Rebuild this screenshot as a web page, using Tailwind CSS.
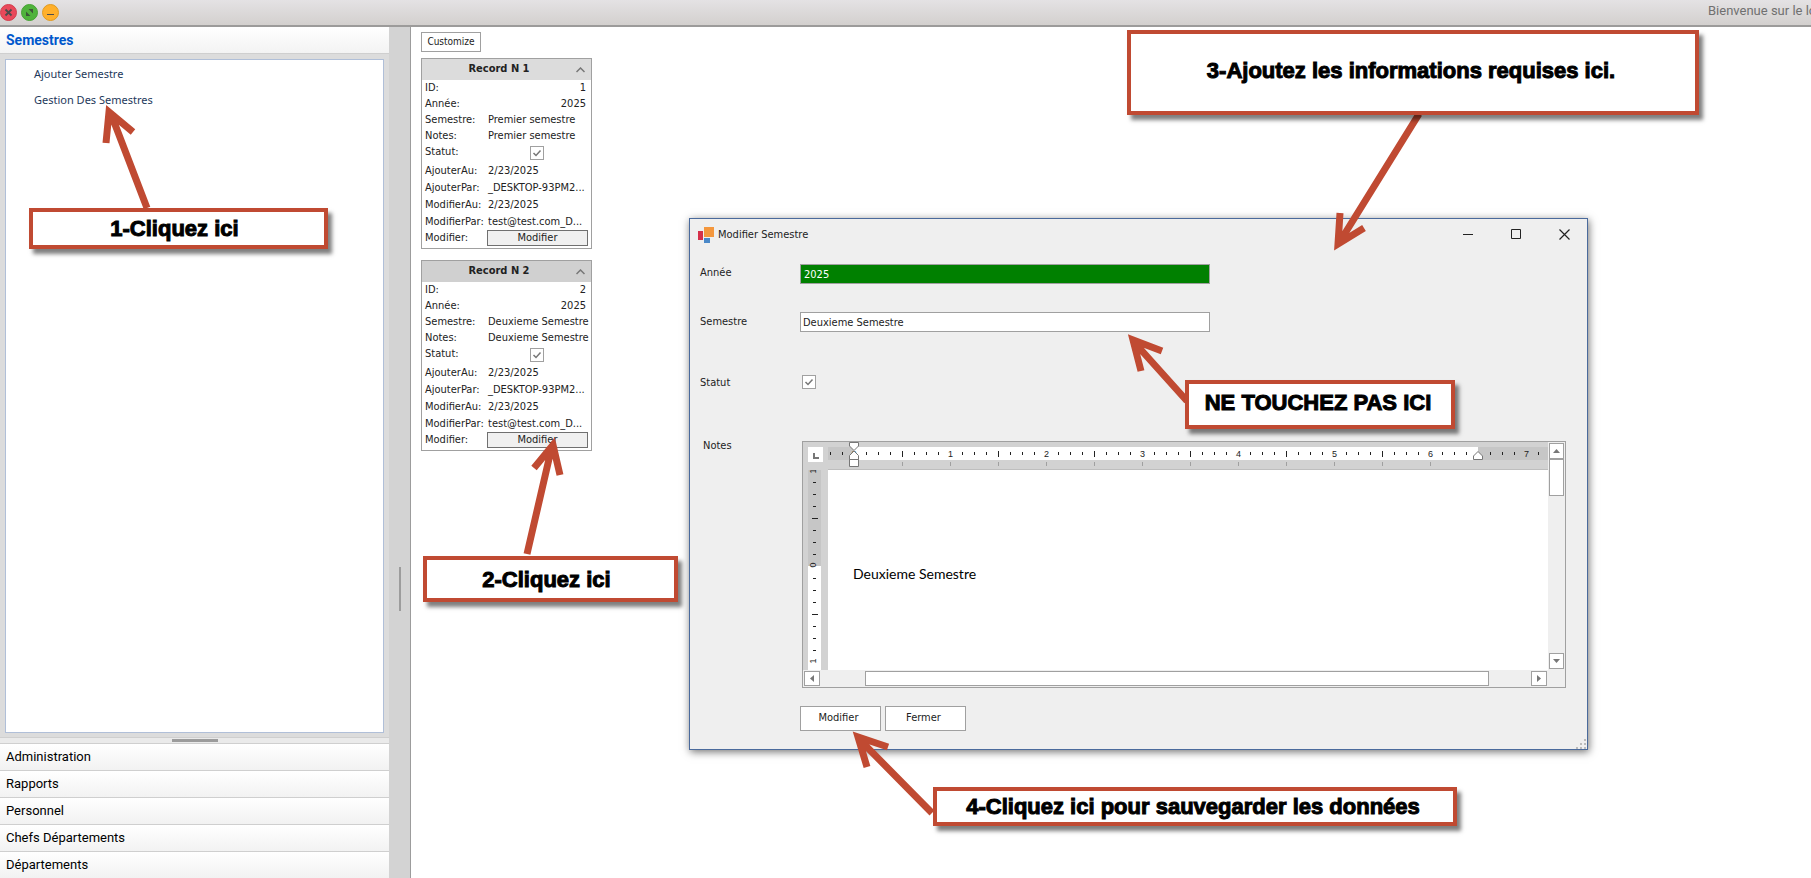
<!DOCTYPE html>
<html lang="fr">
<head>
<meta charset="utf-8">
<title>Semestres</title>
<script src="https://cdn.jsdelivr.net/npm/@tailwindcss/browser@4"></script>
</head>
<body class="relative flex h-screen flex-col overflow-hidden bg-white font-['DejaVu_Sans_Condensed','DejaVu_Sans',sans-serif] text-[11px] text-[#222]">

<header class="flex h-[27px] shrink-0 items-center gap-1 overflow-hidden border-b-2 border-[#9c9b9a] bg-linear-to-b from-[#e4e2e4] to-[#d3d0ce]">
  <button aria-label="Fermer l'application" class="size-[17px] shrink-0"><svg viewBox="0 0 17 17" class="size-[17px]"><circle cx="8.500" cy="8.500" r="8" fill="#e9495a" stroke="#d33d4c"/><path d="M5.500 5.500l6 6M11.500 5.500l-6 6" stroke="#4d4d4d" stroke-width="1.800"/></svg></button>
  <button aria-label="Agrandir l'application" class="size-[17px] shrink-0"><svg viewBox="0 0 17 17" class="size-[17px]"><circle cx="8.500" cy="8.500" r="8" fill="#50b33c" stroke="#46a334"/><path d="M7.500 5h4.500v4.500zM5 7.500v4.500h4.500z" fill="#3d5638"/></svg></button>
  <button aria-label="Réduire l'application" class="size-[17px] shrink-0"><svg viewBox="0 0 17 17" class="size-[17px]"><circle cx="8.500" cy="8.500" r="8" fill="#ffb02b" stroke="#e09a20"/><path d="M5 10.500h7" stroke="#4d4d4d"/></svg></button>
  <p class="ml-auto w-[103px] shrink-0 pb-1 font-[Roboto,sans-serif] text-[13px] leading-4 whitespace-nowrap text-[#707070]">Bienvenue sur le lo</p>
</header>

<div class="flex min-h-0 flex-1">
  <aside class="flex w-[389px] shrink-0 flex-col bg-[#dcdcdc] font-[Roboto,sans-serif]">
    <h1 class="h-[27px] shrink-0 border-b border-[#cfcfcf] bg-linear-to-b from-white to-[#f3f3f3] px-[6px] text-[14px] leading-[26px] font-bold text-[#0058cc]">Semestres</h1>
    <nav class="mx-[5px] mt-[5px] mb-1 flex flex-1 flex-col border border-[#b0bfd8] bg-white px-7 py-px font-['Noto_Sans','Open_Sans',sans-serif] text-[11px] leading-[26px] text-[#1e395b]">
      <a href="#ajouter">Ajouter Semestre</a>
      <a href="#gestion">Gestion Des Semestres</a>
    </nav>
    <div class="flex h-[7px] shrink-0 items-center justify-center border-y border-[#cfcfcf] bg-[#eaeaea]"><div class="h-[3px] w-[46px] bg-[#9c9c9c]"></div></div>
    <nav class="flex shrink-0 flex-col text-[13px] leading-[26px] text-black">
      <a href="#administration" class="border-b border-[#cfcfcf] bg-linear-to-b from-white to-[#f2f2f2] px-[6px]">Administration</a>
      <a href="#rapports" class="border-b border-[#cfcfcf] bg-linear-to-b from-white to-[#f2f2f2] px-[6px]">Rapports</a>
      <a href="#personnel" class="border-b border-[#cfcfcf] bg-linear-to-b from-white to-[#f2f2f2] px-[6px]">Personnel</a>
      <a href="#chefs" class="border-b border-[#cfcfcf] bg-linear-to-b from-white to-[#f2f2f2] px-[6px]">Chefs Départements</a>
      <a href="#departements" class="bg-linear-to-b from-white to-[#f2f2f2] px-[6px]">Départements</a>
    </nav>
  </aside>
  <div class="flex w-[22px] shrink-0 items-center justify-center border-r border-[#9c9c9c] bg-[#d3d3d3] pt-[272px]"><div class="h-[44px] w-[2px] bg-[#9c9c9c]"></div></div>

  <main class="flex flex-1 flex-col items-start px-[10px] pt-[5px]">
    <button class="h-5 w-[60px] border border-[#a0a0a0] bg-white text-[10px] leading-4">Customize</button>

    <section class="mt-[6px] w-[171px] border border-[#a0a0a0] bg-white">
      <h2 class="flex h-[21px] items-center bg-[#dcdcdc] pr-[6px] font-bold"><span class="flex-1 text-center">Record N 1</span><svg viewBox="0 0 9 6" class="h-[6px] w-[9px]"><path d="M.500 5L4.500 1l4 4" fill="none" stroke="#777" stroke-width="1.500"/></svg></h2>
      <dl class="grid grid-cols-[63px_minmax(0,1fr)] pr-[5px] pl-[3px] leading-4 whitespace-nowrap">
        <dt>ID:</dt><dd class="text-right">1</dd>
        <dt>Année:</dt><dd class="text-right">2025</dd>
        <dt>Semestre:</dt><dd>Premier semestre</dd>
        <dt>Notes:</dt><dd>Premier semestre</dd>
        <dt><label for="statut1">Statut:</label></dt><dd class="relative flex h-[18px] items-center justify-center"><input id="statut1" type="checkbox" checked class="size-[14px] appearance-none border border-[#a0a0a0] bg-white"><svg viewBox="0 0 14 14" class="pointer-events-none absolute size-[14px]"><path d="M3.500 7l2.500 2.500 4.500-5" fill="none" stroke="#777" stroke-width="1.500"/></svg></dd>
        <dt class="leading-[17px]">AjouterAu:</dt><dd class="leading-[17px]">2/23/2025</dd>
        <dt class="leading-[17px]">AjouterPar:</dt><dd class="leading-[17px]">_DESKTOP-93PM2...</dd>
        <dt class="leading-[17px]">ModifierAu:</dt><dd class="leading-[17px]">2/23/2025</dd>
        <dt class="leading-[17px]">ModifierPar:</dt><dd class="leading-[17px]">test@test.com_D...</dd>
        <dt>Modifier:</dt><dd class="-mr-[2px] -ml-px"><button class="block h-4 w-full border border-[#707070] bg-[#f0f0f0] leading-[14px]">Modifier</button></dd>
      </dl>
      <div class="h-[2px]"></div>
    </section>

    <section class="mt-[11px] w-[171px] border border-[#a0a0a0] bg-white">
      <h2 class="flex h-[21px] items-center bg-[#d0d0d0] pr-[6px] font-bold"><span class="flex-1 text-center">Record N 2</span><svg viewBox="0 0 9 6" class="h-[6px] w-[9px]"><path d="M.500 5L4.500 1l4 4" fill="none" stroke="#777" stroke-width="1.500"/></svg></h2>
      <dl class="grid grid-cols-[63px_minmax(0,1fr)] pr-[5px] pl-[3px] leading-4 whitespace-nowrap">
        <dt>ID:</dt><dd class="text-right">2</dd>
        <dt>Année:</dt><dd class="text-right">2025</dd>
        <dt>Semestre:</dt><dd>Deuxieme Semestre</dd>
        <dt>Notes:</dt><dd>Deuxieme Semestre</dd>
        <dt><label for="statut2">Statut:</label></dt><dd class="relative flex h-[18px] items-center justify-center"><input id="statut2" type="checkbox" checked class="size-[14px] appearance-none border border-[#a0a0a0] bg-white"><svg viewBox="0 0 14 14" class="pointer-events-none absolute size-[14px]"><path d="M3.500 7l2.500 2.500 4.500-5" fill="none" stroke="#777" stroke-width="1.500"/></svg></dd>
        <dt class="leading-[17px]">AjouterAu:</dt><dd class="leading-[17px]">2/23/2025</dd>
        <dt class="leading-[17px]">AjouterPar:</dt><dd class="leading-[17px]">_DESKTOP-93PM2...</dd>
        <dt class="leading-[17px]">ModifierAu:</dt><dd class="leading-[17px]">2/23/2025</dd>
        <dt class="leading-[17px]">ModifierPar:</dt><dd class="leading-[17px]">test@test.com_D...</dd>
        <dt>Modifier:</dt><dd class="-mr-[2px] -ml-px"><button class="block h-4 w-full border border-[#707070] bg-[#f0f0f0] leading-[14px]">Modifier</button></dd>
      </dl>
      <div class="h-[2px]"></div>
    </section>
  </main>
</div>

<!-- Fenêtre « Modifier Semestre » -->
<div role="dialog" aria-labelledby="dlg-title" class="absolute top-[218px] left-[689px] w-[899px] border border-[#4a6a9c] bg-[#efefef] shadow-[1px_2px_8px_rgba(0,0,0,0.55)]">
  <div class="flex h-[31px] items-center pr-[17px] pl-[8px]">
    <svg viewBox="0 0 16 16" class="size-4"><rect y="4" width="5" height="9" fill="#d5304a"/><rect x="6" width="10" height="10" fill="#f4973d"/><rect x="6" y="11" width="6" height="5" fill="#4a88c8"/></svg>
    <h2 id="dlg-title" class="flex-1 pl-1 leading-4">Modifier Semestre</h2>
    <div class="flex gap-[37px]">
      <button aria-label="Réduire"><svg viewBox="0 0 11 11" class="size-[11px]"><path d="M0 5.500h10" stroke="#222"/></svg></button>
      <button aria-label="Agrandir"><svg viewBox="0 0 11 11" class="size-[11px]"><path d="M.500.500h9v9h-9z" fill="none" stroke="#222"/></svg></button>
      <button aria-label="Fermer la fenêtre"><svg viewBox="0 0 11 11" class="size-[11px]"><path d="M.500.500l10 10M10.500.500l-10 10" stroke="#222" stroke-width="1.200"/></svg></button>
    </div>
  </div>
  <form class="grid grid-cols-[100px_1fr] pt-[14px] pr-[21px] pl-[10px]" onsubmit="return false">
    <label for="annee" class="h-12 leading-[18px]">Année</label>
    <div><input id="annee" value="2025" class="h-5 w-[410px] border border-[#a0a0a0] bg-[#008000] px-[3px] text-white"></div>
    <label for="semestre" class="h-[61px] leading-5">Semestre</label>
    <div><input id="semestre" value="Deuxieme Semestre" class="h-5 w-[410px] border border-[#a0a0a0] bg-white px-[2px]"></div>
    <label for="statut" class="h-[68px] leading-5">Statut</label>
    <div class="relative pt-[2px] pl-[2px]"><input id="statut" type="checkbox" checked class="block size-[14px] appearance-none border border-[#a0a0a0] bg-white"><svg viewBox="0 0 14 14" class="pointer-events-none absolute top-[2px] left-[2px] size-[14px]"><path d="M3.500 7l2.500 2.500 4.500-5" fill="none" stroke="#777" stroke-width="1.500"/></svg></div>
    <label for="notes" class="pl-[3px] leading-[10px]">Notes</label>

    <div class="ml-[2px] border border-[#a0a0a0]">
      <div class="flex">
        <div class="flex-1">
          <svg viewBox="0 0 745 28" class="block h-7 w-[745px] bg-[#d2d2d2] font-['Liberation_Sans',sans-serif] text-[9px]">
            <rect x="5" y="5" width="15" height="15" fill="#fff"/><path d="M10 11h2v4h4v2h-6z" fill="#777"/>
            <rect x="25" y="5" width="720" height="13" fill="#c6c6c6"/><rect x="51" y="5" width="624" height="13" fill="#fff"/>
            <path d="M51 11.500H745" stroke="#222" stroke-width="3" stroke-dasharray="0 12 1 11 1 11 1 23 1 11 1 11 1 11"/>
            <path d="M27 11.500H40" stroke="#222" stroke-width="3" stroke-dasharray="1 11"/>
            <path d="M51 12H670" stroke="#222" stroke-width="6" stroke-dasharray="0 48 1 47"/>
            <g text-anchor="middle" fill="#222"><text x="51" y="15">0</text>
            <text x="147.500" y="15">1</text>
            <text x="243.500" y="15">2</text>
            <text x="339.500" y="15">3</text>
            <text x="435.500" y="15">4</text>
            <text x="531.500" y="15">5</text>
            <text x="627.500" y="15">6</text>
            <text x="723.500" y="15">7</text></g>
            <path d="M99 22H670" stroke="#a0a0a0" stroke-width="4" stroke-dasharray="1 47"/>
            <path d="M46.500.500h9v3.500l-4.500 4.500-4.500-4.500zM46.500 17.500v-4l4.500-4.500 4.500 4.500v4zM46.500 17.500h9v7h-9z" fill="#fff" stroke="#777"/>
            <path d="M670.500 17.500v-3.500l4.500-4.500 4.500 4.500v3.500z" fill="#fff" stroke="#777"/>
            <path d="M25 27.500H745" stroke="#bebebe"/>
          </svg>
          <div class="flex">
            <svg viewBox="0 0 25 200" class="block h-[200px] w-[25px] shrink-0 bg-[#d2d2d2] font-['Liberation_Sans',sans-serif] text-[9px]">
              <rect x="5" width="13" height="96" fill="#c6c6c6"/><rect x="5" y="96" width="13" height="104" fill="#fff"/>
              <path d="M11.500 0V190" stroke="#222" stroke-width="3" stroke-dasharray="0 12 1 11 1 11 1 23 1 11 1 11 1 11"/>
              <path d="M9 48.500h6M9 144.500h6" stroke="#222"/>
              <g text-anchor="middle" fill="#222"><text transform="translate(13 1) rotate(-90)">1</text><text transform="translate(13 95) rotate(-90)">0</text><text transform="translate(13 191) rotate(-90)">1</text></g>
            </svg>
            <textarea id="notes" class="block h-[200px] flex-1 resize-none bg-white pt-[94px] pl-[25px] font-[Lato,sans-serif] text-[14px] leading-5 text-black">Deuxieme Semestre</textarea>
          </div>
        </div>
        <div class="flex w-[17px] flex-col px-px pt-px pb-px">
          <button type="button" aria-label="Défiler vers le haut" class="flex h-4 w-[15px] items-center justify-center border border-[#a0a0a0] bg-white"><svg viewBox="0 0 7 4" class="h-1 w-[7px]"><path d="M0 4L3.500 0 7 4z" fill="#777"/></svg></button>
          <div class="h-[37px] w-[15px] border border-[#a0a0a0] bg-white"></div>
          <button type="button" aria-label="Défiler vers le bas" class="mt-auto flex h-4 w-[15px] items-center justify-center border border-[#a0a0a0] bg-white"><svg viewBox="0 0 7 4" class="h-1 w-[7px]"><path d="M0 0L3.500 4 7 0z" fill="#777"/></svg></button>
        </div>
      </div>
      <div class="flex h-[17px] pt-px pr-[18px] pl-px">
        <button type="button" aria-label="Défiler vers la gauche" class="flex h-[15px] w-4 items-center justify-center border border-[#a0a0a0] bg-white"><svg viewBox="0 0 4 7" class="h-[7px] w-1"><path d="M4 0L0 3.500 4 7z" fill="#777"/></svg></button>
        <div class="ml-[45px] h-[15px] w-[624px] border border-[#a0a0a0] bg-white"></div>
        <button type="button" aria-label="Défiler vers la droite" class="ml-auto flex h-[15px] w-4 items-center justify-center border border-[#a0a0a0] bg-white"><svg viewBox="0 0 4 7" class="h-[7px] w-1"><path d="M0 0L4 3.500 0 7z" fill="#777"/></svg></button>
      </div>
    </div>

    <div class="col-start-2 flex h-[43px] gap-1 pt-[18px]">
      <button class="h-[25px] w-[81px] border border-[#a0a0a0] bg-white pr-1">Modifier</button>
      <button type="button" class="h-[25px] w-[81px] border border-[#a0a0a0] bg-white pr-1">Fermer</button>
    </div>
  </form>
  <div class="flex h-[18px] items-end justify-end"><svg viewBox="0 0 11 11" class="size-[11px]"><path d="M8 1h2v2h-2zM8 5h2v2h-2zM8 9h2v2h-2zM4 5h2v2h-2zM4 9h2v2h-2zM0 9h2v2h-2z" fill="#bbb"/></svg></div>
</div>

<!-- Flèches et étiquettes du guide -->
<svg viewBox="0 0 1811 878" class="pointer-events-none absolute top-0 left-0 h-[878px] w-[1811px]" fill="none" stroke="#c04a32" stroke-width="7" stroke-miterlimit="10">
  <path d="M147 208L111 114M106 143l3-31 24 20"/>
  <path d="M527 554L552 446M534 468l19-23 7 30"/>
  <path d="M1419 114L1339 243M1340 213l-2 31 26-16"/>
  <path d="M1187 401L1134 342M1162 351l-29-11 8 31"/>
  <path d="M932 813L859 739M888 747l-30-10 9 30"/>
</svg>
<div class="absolute top-[208px] left-[29px] flex h-[41px] w-[299px] items-center justify-center border-4 border-[#c04a32] bg-white pr-2 font-['Liberation_Sans',sans-serif] text-[22px] font-bold text-black shadow-[4px_5px_4px_rgba(0,0,0,0.5)] [-webkit-text-stroke:1px_black]">1-Cliquez ici</div>
<div class="absolute top-[556px] left-[423px] flex h-[46px] w-[255px] items-center justify-center border-4 border-[#c04a32] bg-white pr-2 font-['Liberation_Sans',sans-serif] text-[22px] font-bold text-black shadow-[4px_5px_4px_rgba(0,0,0,0.5)] [-webkit-text-stroke:1px_black]">2-Cliquez ici</div>
<div class="absolute top-[30px] left-[1127px] flex h-[85px] w-[572px] items-center justify-center border-4 border-[#c04a32] bg-white pr-1 pb-1 font-['Liberation_Sans',sans-serif] text-[22px] font-bold text-black shadow-[4px_5px_4px_rgba(0,0,0,0.5)] [-webkit-text-stroke:1px_black]">3-Ajoutez les informations requises ici.</div>
<div class="absolute top-[380px] left-[1185px] flex h-[49px] w-[270px] items-center justify-center border-4 border-[#c04a32] bg-white pr-1 pb-1 font-['Liberation_Sans',sans-serif] text-[22px] font-bold text-black shadow-[4px_5px_4px_rgba(0,0,0,0.5)] [-webkit-text-stroke:1px_black]">NE TOUCHEZ PAS ICI</div>
<div class="absolute top-[787px] left-[933px] flex h-[39px] w-[524px] items-center justify-center border-4 border-[#c04a32] bg-white pr-1 font-['Liberation_Sans',sans-serif] text-[22px] font-bold text-black shadow-[4px_5px_4px_rgba(0,0,0,0.5)] [-webkit-text-stroke:1px_black]">4-Cliquez ici pour sauvegarder les données</div>
</body>
</html>
